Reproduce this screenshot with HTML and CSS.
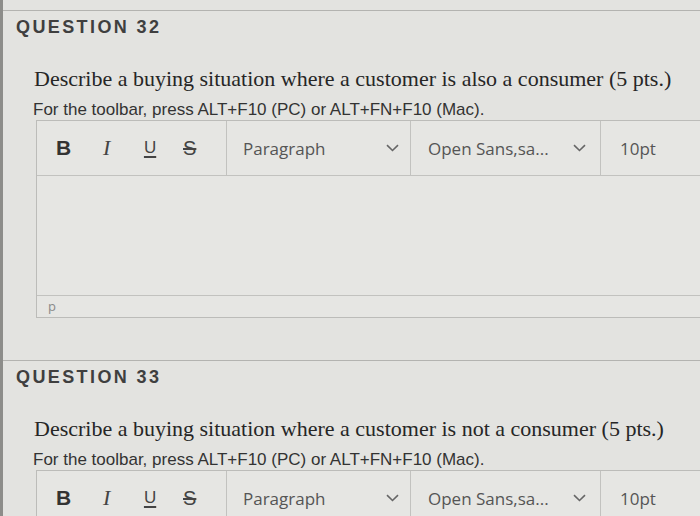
FILE: index.html
```html
<!DOCTYPE html>
<html lang="en">
<head>
<meta charset="utf-8">
<title>Questions</title>
<link rel="stylesheet" href="styles.css">
</head>
<body>
<div class="page">
  <section class="question q1">
    <h2 class="q-title">QUESTION 32</h2>
    <p class="q-text">Describe a buying situation where a customer is also a consumer (5 pts.)</p>
    <p class="q-hint">For the toolbar, press ALT+F10 (PC) or ALT+FN+F10 (Mac).</p>
    <div class="editor">
      <div class="toolbar">
        <div class="fmt">
          <span class="btn b">B</span>
          <span class="btn i">I</span>
          <span class="btn u">U</span>
          <span class="btn s">S</span>
        </div>
        <div class="sel sel-para"><span>Paragraph</span><svg class="chev" width="13" height="8" viewBox="0 0 13 8"><path d="M1 1.2 L6.5 6.5 L12 1.2" fill="none" stroke="#666" stroke-width="1.6"/></svg></div>
        <div class="sel sel-font"><span>Open Sans,sa...</span><svg class="chev" width="13" height="8" viewBox="0 0 13 8"><path d="M1 1.2 L6.5 6.5 L12 1.2" fill="none" stroke="#666" stroke-width="1.6"/></svg></div>
        <div class="sel sel-size"><span>10pt</span></div>
      </div>
      <div class="content"></div>
      <div class="status">p</div>
    </div>
  </section>
  <section class="question q2">
    <h2 class="q-title">QUESTION 33</h2>
    <p class="q-text">Describe a buying situation where a customer is not a consumer (5 pts.)</p>
    <p class="q-hint">For the toolbar, press ALT+F10 (PC) or ALT+FN+F10 (Mac).</p>
    <div class="editor">
      <div class="toolbar">
        <div class="fmt">
          <span class="btn b">B</span>
          <span class="btn i">I</span>
          <span class="btn u">U</span>
          <span class="btn s">S</span>
        </div>
        <div class="sel sel-para"><span>Paragraph</span><svg class="chev" width="13" height="8" viewBox="0 0 13 8"><path d="M1 1.2 L6.5 6.5 L12 1.2" fill="none" stroke="#666" stroke-width="1.6"/></svg></div>
        <div class="sel sel-font"><span>Open Sans,sa...</span><svg class="chev" width="13" height="8" viewBox="0 0 13 8"><path d="M1 1.2 L6.5 6.5 L12 1.2" fill="none" stroke="#666" stroke-width="1.6"/></svg></div>
        <div class="sel sel-size"><span>10pt</span></div>
      </div>
      <div class="content"></div>
      <div class="status">p</div>
    </div>
  </section>
</div>
</body>
</html>
```
FILE: styles.css
```css
html, body {
  margin: 0;
  padding: 0;
  background: #e3e3e0;
}
body {
  width: 700px;
  height: 516px;
  overflow: hidden;
}
.page {
  border-left: 3px solid #8d8d8a;
  height: 516px;
  box-sizing: border-box;
  padding-top: 10px;
  overflow: hidden;
}
.question {
  border-top: 1px solid #b3b3b0;
}
.q2 {
  margin-top: 42px;
}
.q-title {
  margin: 0;
  padding: 5px 0 0 13px;
  font-family: "Liberation Sans", Arial, sans-serif;
  font-weight: bold;
  font-size: 18px;
  line-height: 22px;
  letter-spacing: 2.4px;
  color: #3f3f3f;
}
.q-text {
  margin: 28px 0 0 31px;
  font-family: "Liberation Serif", "Times New Roman", serif;
  font-size: 22px;
  line-height: 26px;
  color: #262626;
  white-space: nowrap;
}
.q-hint {
  margin: 8px 0 0 30px;
  font-family: "Liberation Sans", Arial, sans-serif;
  font-size: 17px;
  line-height: 20px;
  color: #333;
  white-space: nowrap;
}
.editor {
  margin: 0 -20px 0 33px;
  border: 1px solid #bcbcb9;
  background: #e6e6e3;
}
.toolbar {
  display: flex;
  height: 54px;
  border-bottom: 1px solid #c2c2bf;
  font-family: "Open Sans", sans-serif;
  font-size: 17px;
  color: #555;
}
.fmt {
  width: 190px;
  display: flex;
  align-items: center;
  padding-left: 19px;
  box-sizing: border-box;
  border-right: 1px solid #c2c2bf;
}
.btn {
  width: 44px;
  color: #333;
  line-height: 24px;
}
.btn.b {
  font-family: "Liberation Sans", Arial, sans-serif;
  font-weight: bold;
  font-size: 21px;
  width: 48px;
}
.btn.i {
  font-family: "Liberation Serif", serif;
  font-style: italic;
  font-size: 22px;
  color: #444;
  width: 42px;
}
.btn.u {
  font-family: "Liberation Sans", Arial, sans-serif;
  font-size: 17px;
  text-decoration: underline;
  text-decoration-thickness: 2px;
  text-underline-offset: 3px;
  color: #444;
  width: 40px;
}
.btn.s {
  font-family: "Liberation Sans", Arial, sans-serif;
  font-size: 20px;
  text-decoration: line-through;
  text-decoration-thickness: 1.5px;
  color: #444;
}
.sel {
  display: flex;
  align-items: center;
  justify-content: space-between;
  box-sizing: border-box;
  border-right: 1px solid #c2c2bf;
}
.sel-para {
  width: 184px;
  padding: 0 11px 0 16px;
}
.sel-font {
  width: 190px;
  padding: 0 14px 0 17px;
}
.sel-size {
  flex: 1;
  border-right: none;
  padding-left: 19px;
}
.chev {
  display: block;
}
.content {
  height: 119px;
  border-bottom: 1px solid #c2c2bf;
}
.status {
  height: 21px;
  padding-left: 11px;
  font-family: "Open Sans", sans-serif;
  font-size: 13px;
  line-height: 21px;
  color: #8a8a8a;
}
```
